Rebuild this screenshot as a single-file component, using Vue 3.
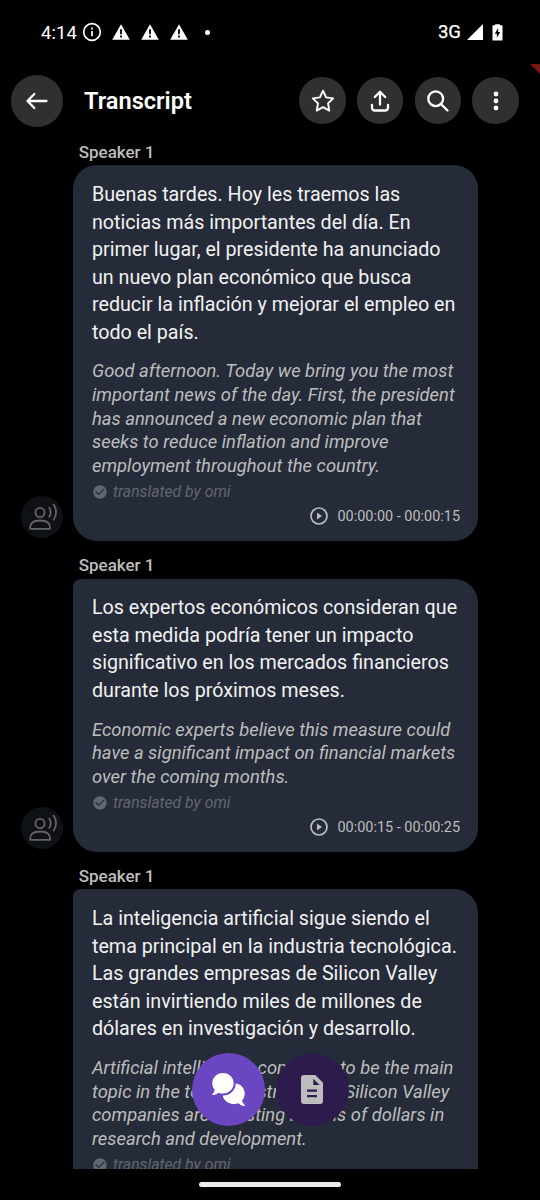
<script setup>
const segments = [
  {
    original: [
      'Buenas tardes. Hoy les traemos las',
      'noticias más importantes del día. En',
      'primer lugar, el presidente ha anunciado',
      'un nuevo plan económico que busca',
      'reducir la inflación y mejorar el empleo en',
      'todo el país.',
    ],
    translated: [
      'Good afternoon. Today we bring you the most',
      'important news of the day. First, the president',
      'has announced a new economic plan that',
      'seeks to reduce inflation and improve',
      'employment throughout the country.',
    ],
    time: '00:00:00 - 00:00:15',
  },
  {
    original: [
      'Los expertos económicos consideran que',
      'esta medida podría tener un impacto',
      'significativo en los mercados financieros',
      'durante los próximos meses.',
    ],
    translated: [
      'Economic experts believe this measure could',
      'have a significant impact on financial markets',
      'over the coming months.',
    ],
    time: '00:00:15 - 00:00:25',
  },
  {
    original: [
      'La inteligencia artificial sigue siendo el',
      'tema principal en la industria tecnológica.',
      'Las grandes empresas de Silicon Valley',
      'están invirtiendo miles de millones de',
      'dólares en investigación y desarrollo.',
    ],
    translated: [
      'Artificial intelligence continues to be the main',
      'topic in the tech industry. Large Silicon Valley',
      'companies are investing billions of dollars in',
      'research and development.',
    ],
    time: '',
  },
]
</script>

<template>
  <div class="screen">
    <header class="status">
      <span class="clock">4:14</span>
      <svg class="info" viewBox="0 0 20 20" fill="none" stroke="#fff" stroke-width="1.7">
        <circle cx="10" cy="10" r="8.3" />
        <path d="M10 9v5.2M10 5.6v1.9" />
      </svg>
      <svg v-for="n in 3" :key="n" class="warn" viewBox="0 0 18 16">
        <path fill="#fff" d="M9 0.2 17.8 15.8H0.2z" />
        <path d="M9 5.2v5M9 11.6v2" stroke="#000" stroke-width="1.8" />
      </svg>
      <i class="more-dot"></i>
      <span class="net">3G</span>
      <svg class="signal" viewBox="0 0 16 16"><path fill="#fff" d="M16 0v16H0z" /></svg>
      <svg class="battery" viewBox="0 0 11 18">
        <path fill="#fff" d="M3 1.2V.3h5v.9h2q.8 0 .8.9v14.600q0 .9-.8.9H1q-.8 0-.8-.9V2.100q0-.9.8-.9z" />
        <path d="M6.200 4.200 2.600 10.200h2.200v4.400L8.400 8.600H6.200z" />
      </svg>
    </header>

    <nav class="bar">
      <button class="round back">
        <svg width="24" height="24" viewBox="0 0 24 24" class="line">
          <path d="M21.500 12H2.600M9.300 5 2.500 12l6.800 7" />
        </svg>
      </button>
      <h1>Transcript</h1>
      <button class="round">
        <svg width="24" height="24" viewBox="0 0 24 24" class="line star">
          <path d="M12 1.700l3.100 6.700 7.100 1-5.200 5 1.300 7.200L12 18.100l-6.300 3.500L7 14.400l-5.200-5 7.100-1z" />
        </svg>
      </button>
      <button class="round">
        <svg width="24" height="24" viewBox="0 0 24 24" class="line">
          <path d="M12 15.500V3M6.800 8 12 2.700 17.200 8M4 16v2.500q0 3 3 3h10q3 0 3-3V16" />
        </svg>
      </button>
      <button class="round">
        <svg width="24" height="24" viewBox="0 0 24 24" class="line">
          <circle cx="9.700" cy="9.700" r="7.400" />
          <path d="M15.200 15.200l6.300 6.300" />
        </svg>
      </button>
      <button class="round">
        <svg width="24" height="24" viewBox="0 0 24 24" fill="#fff">
          <circle cx="12" cy="5" r="2.400" /><circle cx="12" cy="12" r="2.400" /><circle cx="12" cy="19" r="2.400" />
        </svg>
      </button>
    </nav>

    <main class="list">
      <section v-for="(s, i) in segments" :key="i" class="segment">
        <div class="avatar">
          <svg width="30" height="30" viewBox="0 0 30 30">
            <circle cx="13" cy="10.500" r="4.600" />
            <path d="M3.200 26.300q-.5-7.800 9.900-7.800T23 26.300q0 .6-.6.600H3.800q-.6 0-.6-.6zM22.300 5.700q2.800 4.500 0 9M26.700 2.600q4.700 7.400 0 15" />
          </svg>
        </div>
        <div class="content">
          <div class="speaker">Speaker 1</div>
          <article :class="['bubble', { first: i === 0 }]">
            <p class="original"><span v-for="t in s.original" :key="t">{{ t }}</span></p>
            <p class="translated"><span v-for="t in s.translated" :key="t">{{ t }}</span></p>
            <div class="by">
              <svg width="16" height="16" viewBox="0 0 24 24">
                <path fill="currentColor" d="M12 2C6.480 2 2 6.480 2 12s4.480 10 10 10 10-4.480 10-10S17.520 2 12 2zm-2 15-5-5 1.410-1.410L10 14.170l7.590-7.590L19 8z" />
              </svg>
              translated by omi
            </div>
            <div class="time">
              <template v-if="s.time">
                <svg width="20" height="20" viewBox="0 0 20 20">
                  <circle cx="10" cy="10" r="8" fill="none" stroke="currentColor" stroke-width="1.700" />
                  <path d="M8 6.600v6.800l5-3.400z" fill="currentColor" />
                </svg>
                <span>{{ s.time }}</span>
              </template>
            </div>
          </article>
        </div>
      </section>
    </main>

    <footer class="home"><i></i></footer>

    <div class="corner"></div>
    <div class="tabs">
      <button class="tab active">
        <svg width="33" height="33" viewBox="0 0 33 33">
          <path fill="#fff" d="M22 10.300C28.300 10.300 32.700 14.900 32.700 20.500 32.700 23.200 31.700 25.600 30.100 27.500 30.500 29.500 31.500 30.900 32.700 32 33.100 32.500 32.900 33 32.300 33 30 33 27.900 31.800 26.400 30.300 25.100 30.800 23.600 31 22 31 17.200 31 12.900 28.400 11 24L11 10.300z" />
          <path fill="#fff" stroke="#6b46c1" stroke-width="4" paint-order="stroke" d="M11 0C17 0 21.700 4.600 21.700 10.300S17 20.600 11 20.600C9.400 20.600 7.900 20.300 6.600 19.700 4.700 21.200 2.700 22.100.7 22.100.100 22.100 0 21.600.300 21.200 1.500 20 2.300 18.700 2.700 17 1.200 15.200.300 12.900.300 10.300.300 4.600 5 0 11 0z" />
        </svg>
      </button>
      <button class="tab">
        <svg width="22" height="29" viewBox="0 0 22 29">
          <path fill="#bdbdbd" fill-rule="evenodd" d="M3 0H14.300L22 7.700V26Q22 29 19 29H3Q0 29 0 26V3Q0 0 3 0zM12.300 3.700V10H18.600zM6 14.500v2.200h10v-2.200zM6 20v2.200h10V20z" />
        </svg>
      </button>
    </div>
  </div>
</template>

<style>
html, body { background: #000; }
</style>

<style scoped>
.screen {
  position: relative;
  display: flex;
  flex-direction: column;
  width: 540px;
  height: 1200px;
  overflow: hidden;
  background: #000;
  color: #fff;
  font-family: Roboto, "Liberation Sans", sans-serif;
}
button { border: 0; padding: 0; display: flex; align-items: center; justify-content: center; }
p, h1 { margin: 0; font-weight: 400; }
svg { flex: none; display: block; }

.status {
  display: flex;
  align-items: center;
  height: 64px;
  padding: 0 37px 0 41px;
  flex: none;
  font-size: 18.400px;
}
.clock { width: 36px; letter-spacing: .1px; white-space: nowrap; }
.info { width: 20px; height: 20px; margin-left: 4.600px; margin-right: 10px; }
.warn { width: 18px; height: 16px; margin-right: 11px; }
.more-dot { width: 5px; height: 5px; border-radius: 50%; background: #fff; margin-left: 6px; }
.net { margin-left: auto; font-size: 18.600px; -webkit-text-stroke: .25px #fff; }
.signal { width: 16px; height: 16px; margin-left: 6px; }
.battery { width: 11px; height: 17px; margin-left: 9px; }

.bar {
  display: flex;
  align-items: center;
  gap: 11.200px;
  height: 73px;
  padding: 0 21.200px 0 10.500px;
  flex: none;
}
.round { width: 46.500px; height: 46.500px; border-radius: 50%; background: #303030; }
.back { width: 52px; height: 52px; }
h1 { margin-left: 10.300px; margin-right: auto; font-size: 23.600px; font-weight: 600; }
.line { fill: none; stroke: #fff; stroke-width: 2.300; stroke-linecap: round; stroke-linejoin: round; }
.star { stroke-width: 1.900; }

.list { flex: 1; min-height: 0; overflow: hidden; padding: 4.800px 0 0 21px; }
.segment { display: flex; align-items: flex-end; gap: 10.400px; margin-bottom: 14.200px; }
.avatar {
  width: 42px;
  height: 42px;
  margin-bottom: 3.100px;
  border-radius: 50%;
  background: #0e1116;
  display: flex;
  align-items: center;
  justify-content: center;
}
.avatar svg { fill: none; stroke: #626467; stroke-width: 1.800; stroke-linecap: round; }
.speaker { height: 23.500px; padding-left: 5.300px; line-height: 21.500px; font-size: 17px; font-weight: 500; color: #bdbdbd; }
.bubble { box-sizing: border-box; width: 405px; padding: 15.700px 18.400px 14.500px 18.600px; border-radius: 8px 24px 24px 24px; background: #252b38; }
.bubble.first { border-top-left-radius: 24px; }
.original span, .translated span { display: block; white-space: nowrap; }
.original { font-size: 19.700px; line-height: 27.560px; color: #f2f2f2; }
.translated { margin-top: 13px; font-size: 18.400px; line-height: 23.700px; font-style: italic; color: #bdbdbd; }
.by { display: flex; align-items: center; gap: 5px; margin-top: 4.500px; height: 19px; font-size: 15.750px; font-style: italic; color: #62666f; }
.time { display: flex; align-items: center; justify-content: flex-end; gap: 8px; height: 20px; margin-top: 5px; font-size: 14.440px; color: #bdbdbd; }

.home { flex: none; height: 31.500px; display: flex; justify-content: center; padding-top: 13.500px; box-sizing: border-box; }
.home i { width: 142px; height: 5px; border-radius: 3px; background: #ececec; }

.corner { position: absolute; right: 0; top: 64px; width: 10px; height: 10px; background: #7a1414; clip-path: polygon(0 0, 100% 0, 100% 100%); }
.tabs { position: absolute; left: 191.500px; top: 1053px; display: flex; gap: 11px; }
.tab { width: 73px; height: 73px; border-radius: 50%; background: #2d1b4e; }
.tab.active { background: #6b46c1; }
</style>
